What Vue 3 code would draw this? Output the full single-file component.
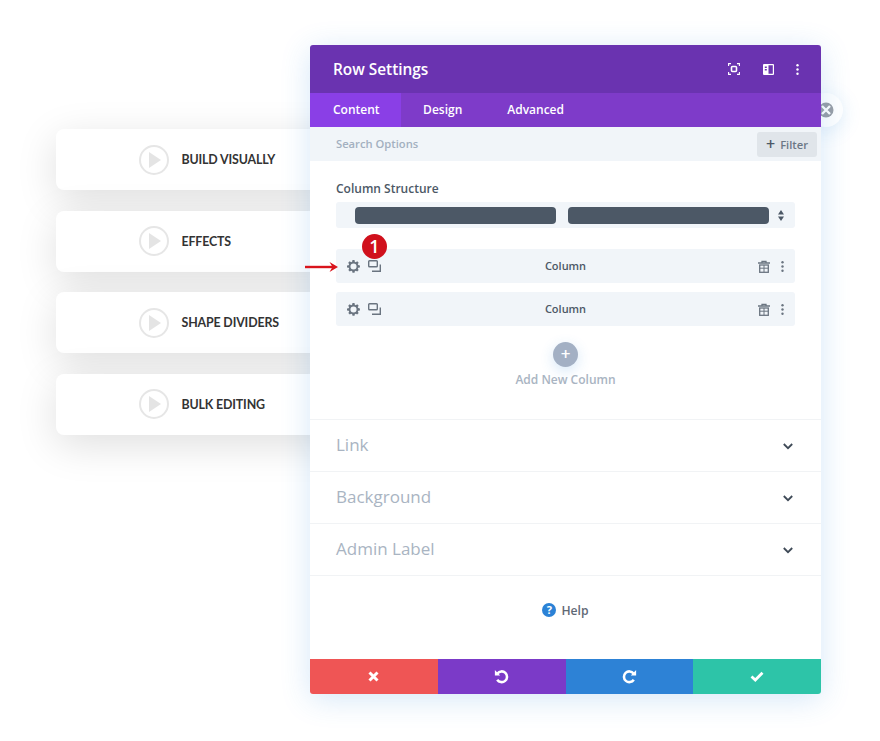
<script setup>
const cards = ['BUILD VISUALLY', 'EFFECTS', 'SHAPE DIVIDERS', 'BULK EDITING']
const tabs = ['Content', 'Design', 'Advanced']
const sections = ['Link', 'Background', 'Admin Label']
</script>

<template>
  <div class="stage">
    <div class="cards">
      <div v-for="c in cards" :key="c" class="card">
        <span class="play"><svg width="12" height="16" viewBox="0 0 12 16"><path d="M0 0l12 8-12 8z" fill="#e4e4e4" /></svg></span>
        <span class="card-label">{{ c }}</span>
      </div>
    </div>

    <div class="panel-wrap">
      <div class="close-bubble">
        <svg width="16" height="16" viewBox="0 0 16 16">
          <circle cx="8" cy="8" r="7.500" fill="#9a9ea6" />
          <path d="M4 4l8 8M12 4l-8 8" stroke="#fff" stroke-width="2.400" />
        </svg>
      </div>

      <section class="panel">
        <header class="head">
          <h1>Row Settings</h1>
          <div class="head-icons">
            <svg width="12" height="12" viewBox="0 0 12 12" fill="none" stroke="#fff" stroke-width="1.100">
              <path d="M.6 3V.6H3M9 .6h2.400V3M11.400 9v2.400H9M3 11.400H.6V9" />
              <rect x="3.500" y="3.500" width="5" height="5" rx="1" stroke-width="1.600" />
            </svg>
            <svg width="11" height="11" viewBox="0 0 11 11">
              <path fill-rule="evenodd" d="M1 0h9a1 1 0 0 1 1 1v9a1 1 0 0 1-1 1H1a1 1 0 0 1-1-1V1a1 1 0 0 1 1-1zm4.500 1.200v8.600h4.300V1.200zM1.800 2.500V4h2V2.500zM1.800 5v1.500h2V5z" fill="#fff" />
            </svg>
            <svg width="3" height="11" viewBox="0 0 3 11" fill="#fff"><circle cx="1.500" cy="1.300" r="1.200" /><circle cx="1.500" cy="5.500" r="1.200" /><circle cx="1.500" cy="9.700" r="1.200" /></svg>
          </div>
        </header>

        <nav class="tabs">
          <span v-for="(t, i) in tabs" :key="t" class="tab" :class="{ active: i === 0 }">{{ t }}</span>
        </nav>

        <div class="search">
          <span class="search-text">Search Options</span>
          <span class="filter"><b>+</b> Filter</span>
        </div>

        <div class="content">
          <div class="label">Column Structure</div>
          <div class="select">
            <i class="bar"></i><i class="bar"></i>
            <svg width="6" height="11" viewBox="0 0 6 11" fill="#4c5866"><path d="M3 0l3 4.500H0zM3 11L0 6.500h6z" /></svg>
          </div>

          <div class="rows">
            <div v-for="n in 2" :key="n" class="row">
              <div class="row-left">
                <svg width="13" height="13" viewBox="0 0 14 14">
                  <path fill-rule="evenodd" fill="#6a7480" d="M5.900 0h2.200l.3 1.800 1.100.5 1.500-1 1.600 1.600-1 1.500.5 1.100 1.800.3v2.200l-1.800.3-.5 1.100 1 1.500-1.600 1.600-1.500-1-1.100.5-.3 1.800H5.900l-.3-1.800-1.100-.5-1.500 1-1.600-1.600 1-1.500-.5-1.100L0 8.100V5.900l1.800-.3.5-1.100-1-1.500 1.600-1.600 1.500 1 1.100-.5zM7 3.700a3.300 3.300 0 1 0 0 6.600 3.300 3.300 0 0 0 0-6.600z" />
                </svg>
                <svg width="13" height="12" viewBox="0 0 13 12" fill="none" stroke="#6a7480" stroke-width="1.400">
                  <rect x=".7" y=".7" width="8.600" height="6.100" rx=".8" />
                  <path d="M12.300 4.500v6.800H4" />
                </svg>
              </div>
              <span class="row-title">Column</span>
              <div class="row-right">
                <svg width="12" height="13" viewBox="0 0 12 13" fill="none" stroke="#6a7480" stroke-width="1.300">
                  <path d="M0 3h12M4 3V1.300h4V3" />
                  <rect x="1.700" y="5" width="8.600" height="7.300" />
                  <path d="M1.700 8.200h8.600M6 5v7" stroke-width="1" />
                </svg>
                <svg width="3" height="11" viewBox="0 0 3 11" fill="#6a7480"><circle cx="1.500" cy="1.300" r="1.200" /><circle cx="1.500" cy="5.500" r="1.200" /><circle cx="1.500" cy="9.700" r="1.200" /></svg>
              </div>
            </div>
            <div class="badge">1</div>
            <svg class="arrow" width="33" height="10" viewBox="0 0 33 10">
              <path d="M0 5h29" stroke="#d9141c" stroke-width="2.400" />
              <path d="M24.500 0L33 5l-8.500 5L27.500 5z" fill="#d9141c" />
            </svg>
          </div>

          <div class="add">
            <span class="add-btn">+</span>
            <span class="add-text">Add New Column</span>
          </div>
        </div>

        <div v-for="s in sections" :key="s" class="section">
          <span class="section-name">{{ s }}</span>
          <svg width="10" height="7" viewBox="0 0 10 7" fill="none" stroke="#3f4a57" stroke-width="1.800"><path d="M.8 1l4.200 4.200L9.200 1" /></svg>
        </div>

        <div class="help">
          <span class="help-dot">?</span>
          <span>Help</span>
        </div>

        <footer class="foot">
          <button class="red">
            <svg width="11" height="11" viewBox="0 0 11 11"><path d="M1.500 1.500l8 8M9.500 1.500l-8 8" stroke="#fff" stroke-width="3" /></svg>
          </button>
          <button class="purple">
            <svg width="15" height="15" viewBox="0 0 14 14" fill="none"><path d="M3.200 4.200A5 5 0 1 1 3 10" stroke="#fff" stroke-width="2.400" /><path d="M.8 1v5h5z" fill="#fff" /></svg>
          </button>
          <button class="blue">
            <svg width="15" height="15" viewBox="0 0 14 14" fill="none"><path d="M10.800 4.200A5 5 0 1 0 11 10" stroke="#fff" stroke-width="2.400" /><path d="M13.200 1v5h-5z" fill="#fff" /></svg>
          </button>
          <button class="green">
            <svg width="14" height="11" viewBox="0 0 14 11" fill="none"><path d="M1.500 5.500l3.800 3.500L12.500 1.800" stroke="#fff" stroke-width="2.800" /></svg>
          </button>
        </footer>
      </section>
    </div>
  </div>
</template>

<style>
html, body { margin: 0; background: #fff; }
</style>

<style scoped>
.stage {
  display: flex;
  width: 880px;
  height: 741px;
  overflow: hidden;
  background: #fff;
  box-sizing: border-box;
  padding: 45px 0 0 56px;
}
.cards {
  width: 254px;
  flex: none;
  padding-top: 84px;
  display: flex;
  flex-direction: column;
  gap: 20.500px;
}
.card {
  height: 61px;
  width: 300px;
  box-sizing: border-box;
  padding-left: 83px;
  display: flex;
  align-items: center;
  background: #fff;
  border-radius: 8px;
  box-shadow: 0 10px 40px rgba(0, 0, 0, .13);
}
.play {
  width: 30px;
  height: 30px;
  box-sizing: border-box;
  border: 2px solid #e6e6e6;
  border-radius: 50%;
  display: flex;
  align-items: center;
  justify-content: center;
  padding-left: 2px;
  margin-right: 12.500px;
}
.card-label {
  font: 700 12.400px "Lato", sans-serif;
  color: #333;
  letter-spacing: -.15px;
}
.panel-wrap {
  position: relative;
  width: 511px;
  height: 649px;
  flex: none;
}
.close-bubble {
  position: absolute;
  left: 499px;
  top: 48px;
  width: 34px;
  height: 34px;
  border-radius: 50%;
  background: #fff;
  box-shadow: 0 4px 20px rgba(43, 135, 218, .15);
  display: flex;
  align-items: center;
  justify-content: center;
}
.panel {
  position: relative;
  height: 649px;
  display: flex;
  flex-direction: column;
  background: #fff;
  border-radius: 3px;
  font-family: "Open Sans", sans-serif;
  box-shadow: 0 5px 30px rgba(43, 135, 218, .2);
}
.head {
  height: 48px;
  flex: none;
  background: #6a33b0;
  border-radius: 3px 3px 0 0;
  display: flex;
  align-items: center;
  justify-content: space-between;
  padding: 0 22px 0 23px;
}
.head h1 {
  margin: 0;
  font-size: 15.400px;
  font-weight: 600;
  color: #fff;
}
.head-icons {
  display: flex;
  align-items: center;
  gap: 22.500px;
}
.tabs {
  height: 34px;
  flex: none;
  display: flex;
  background: #7e3bc9;
}
.tab {
  display: flex;
  align-items: center;
  padding: 0 22.500px 1px;
  font-size: 12px;
  font-weight: 600;
  color: #fff;
}
.tab.active {
  background: #8a3fe6;
  padding: 0 21px 1px 23px;
}
.search {
  height: 34px;
  flex: none;
  background: #f1f5f9;
  display: flex;
  align-items: center;
  justify-content: space-between;
  padding: 0 4px 0 26px;
  font-size: 11.200px;
  font-weight: 600;
  color: #a3b0c0;
}
.search-text { margin-bottom: 1px; }
.filter {
  width: 60px;
  height: 25px;
  border-radius: 3px;
  background: #e0e5ea;
  color: #6b7785;
  display: flex;
  align-items: center;
  justify-content: center;
  gap: 5px;
}
.filter b { font-size: 16px; font-weight: 600; line-height: 1; color: #4c5866; }
.content {
  flex: none;
  height: 258px;
  box-sizing: border-box;
  padding: 19px 26px 0;
}
.label {
  font-size: 12px;
  font-weight: 600;
  color: #4c5866;
  line-height: 17px;
}
.select {
  margin-top: 5px;
  height: 26px;
  background: #f1f5f9;
  border-radius: 3px;
  display: flex;
  align-items: center;
  padding-left: 19px;
  gap: 12px;
}
.bar {
  flex: none;
  width: 201px;
  height: 17px;
  border-radius: 4px;
  background: #4c5866;
}
.select svg { margin-left: -3px; }
.rows {
  position: relative;
  margin-top: 21px;
  display: flex;
  flex-direction: column;
  gap: 9px;
}
.row {
  height: 34px;
  background: #f1f5f9;
  border-radius: 3px;
  display: grid;
  grid-template-columns: 1fr auto 1fr;
  align-items: center;
  padding: 0 11px 0 11px;
  font-size: 11px;
  font-weight: 600;
  color: #4c5866;
}
.row-title { margin-bottom: 1px; }
.row-left { display: flex; align-items: center; gap: 8px; }
.row-right { display: flex; align-items: center; justify-content: flex-end; gap: 11px; }
.badge {
  position: absolute;
  left: 26px;
  top: -15px;
  width: 25px;
  height: 25px;
  border-radius: 50%;
  background: #d0101c;
  color: #fff;
  font-size: 18px;
  font-weight: 600;
  line-height: 25px;
  text-align: center;
}
.arrow {
  position: absolute;
  left: -31px;
  top: 13px;
}
.add {
  display: flex;
  flex-direction: column;
  align-items: center;
  margin-top: 16px;
}
.add-btn {
  width: 25px;
  height: 25px;
  border-radius: 50%;
  background: #a3b0c4;
  color: #fff;
  font-size: 17px;
  font-weight: 600;
  line-height: 24px;
  text-align: center;
  box-shadow: 0 4px 14px rgba(43, 135, 218, .2);
}
.add-text {
  margin-top: 4px;
  font-size: 12px;
  font-weight: 600;
  color: #a9b4c2;
  line-height: 17px;
}
.section {
  height: 52px;
  flex: none;
  box-sizing: border-box;
  border-top: 1px solid #f1f3f5;
  display: flex;
  align-items: center;
  justify-content: space-between;
  padding: 0 28px 0 26px;
  font-size: 17px;
  color: #a9b4c2;
}
.section-name { margin-bottom: 2px; }
.section svg { margin-top: 2px; }
.help {
  flex: 1;
  border-top: 1px solid #f1f3f5;
  display: flex;
  align-items: flex-start;
  justify-content: center;
  gap: 5px;
  padding-top: 26px;
  font-size: 12.200px;
  font-weight: 600;
  color: #5f6975;
  line-height: 17px;
}
.help-dot {
  width: 14px;
  height: 14px;
  margin-top: 1px;
  border-radius: 50%;
  background: #2b82d6;
  color: #fff;
  font-size: 11px;
  font-weight: 700;
  line-height: 14px;
  text-align: center;
}
.foot {
  height: 35px;
  flex: none;
  display: grid;
  grid-template-columns: repeat(4, 1fr);
}
.foot button {
  border: 0;
  padding: 0;
  display: flex;
  align-items: center;
  justify-content: center;
}
.red { background: #ef5555; border-radius: 0 0 0 3px; }
.purple { background: #7b3ac8; }
.blue { background: #2d82d6; }
.green { background: #2dc4a8; border-radius: 0 0 3px 0; }
</style>
